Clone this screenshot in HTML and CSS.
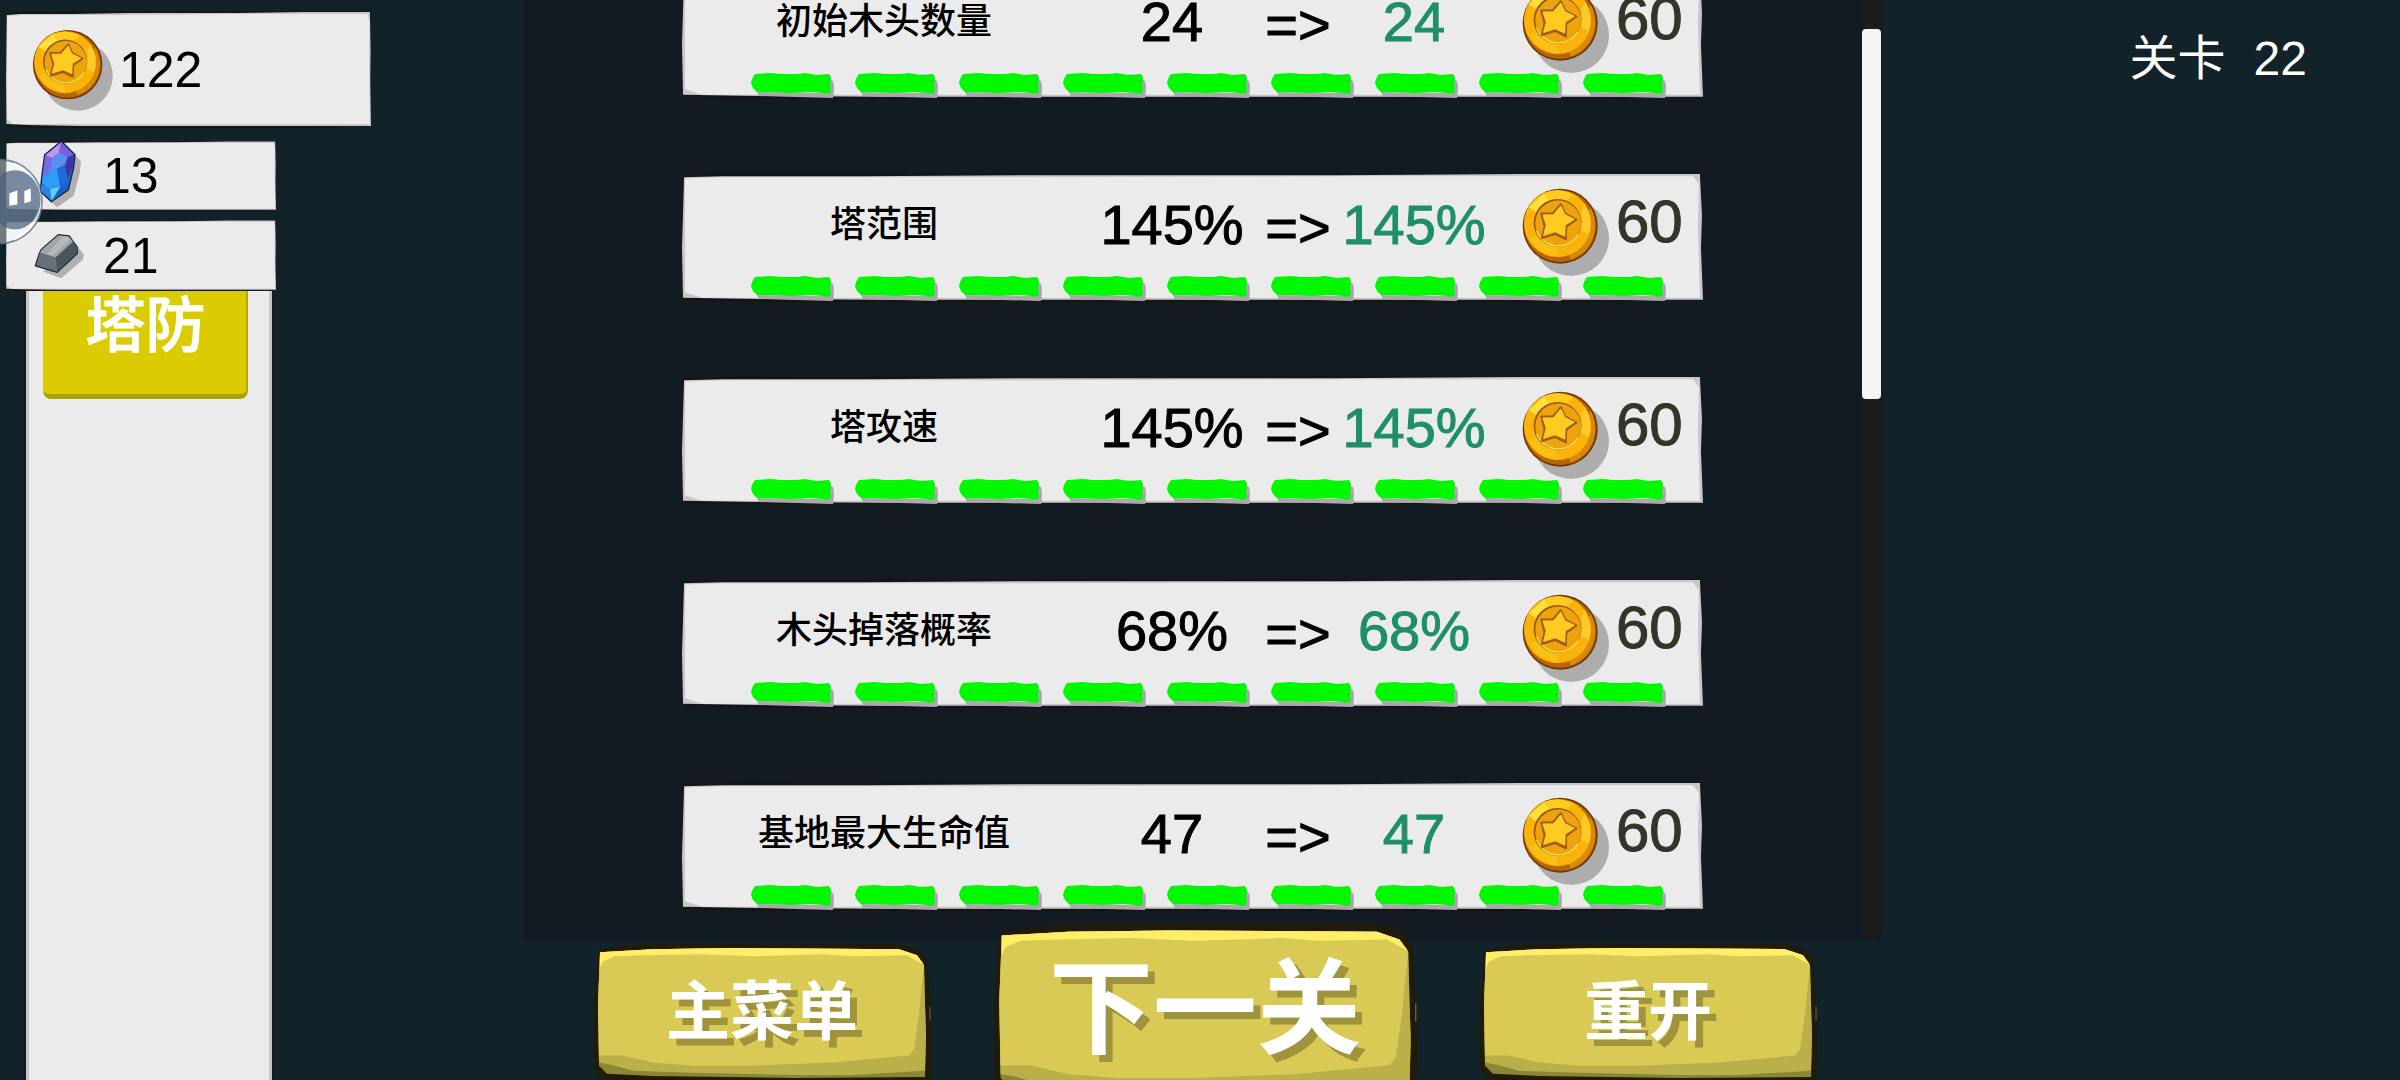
FILE: index.html
```html
<!DOCTYPE html>
<html lang="zh-CN">
<head>
<meta charset="utf-8">
<meta name="viewport" content="width=device-width, initial-scale=1">
<title>塔防</title>
<link rel="stylesheet" href="styles.css">
</head>
<body>
<svg class="defs" aria-hidden="true">
  <symbol id="paper" viewBox="0 0 1000 120" preserveAspectRatio="none">
    <path class="paper-ink" d="M1 2 60 0 140 1 260 0 420 0 600 0 780 0 940 0 996 0 999 6 998 60 1000 118 940 119 830 120 640 120 500 120 320 120 180 120 90 120 40 119 1 118 0 60Z"/>
    <path class="paper-edge" d="M2 4 40 3 180 3 340 2 520 2 640 2 820 1 980 1 997 1 999 40 998 70 1000 118 900 118 640 118 420 118 200 118 60 117 1 116 0 70Z"/>
    <path class="paper-face" d="M3 5 40 4 300 4 640 3 990 3 996 10 995 50 997 116 640 116 200 116 20 116 3 111Z"/>
  </symbol>
  <symbol id="coin" viewBox="20 20 265 267">
    <circle cx="168" cy="172" r="114" fill="#adadad"/>
    <circle cx="135" cy="136" r="113" fill="#70390a"/>
    <circle cx="135" cy="136" r="108" fill="#b96405"/>
    <path d="M226 80A108 108 0 0 1 168 236L150 200 205 140Z" fill="#d98a06"/>
    <circle cx="127" cy="128" r="101" fill="#f9b30b"/>
    <path d="M40 78 86 37 108 62 66 96Z" fill="#ffdf3a"/>
    <path d="M86 37Q130 18 176 42L150 60 104 60Z" fill="#ffcb1c"/>
    <path d="M208 68Q236 110 222 160L198 150 200 92Z" fill="#ffc928"/>
    <path d="M40 170Q70 222 130 228L124 204 66 164Z" fill="#fcc015"/>
    <circle cx="127" cy="126" r="72" fill="#9b560a"/>
    <circle cx="129" cy="128" r="69" fill="#eda30d"/>
    <path d="M64 150A69 69 0 0 0 188 162" fill="none" stroke="#ffe052" stroke-width="4"/>
    <path d="M137 70 150 98 184 116 153 138 152 176 120 160 80 172 88 136 78 98 112 98Z" fill="#a05c08" stroke="#a05c08" stroke-width="6" stroke-linejoin="round"/>
    <path d="M137 75 149 101 178 115 150 133 149 166 120 153 85 164 93 133 83 102 114 102Z" fill="#ffcb20" stroke="#ffcb20" stroke-width="3" stroke-linejoin="round"/>
  </symbol>
  <symbol id="chip" viewBox="0 0 84 25">
    <path d="M8 23 82 25Q84 14 82 8L79 6 72 20 6 19Z" fill="#a9a9a9"/>
    <path d="M1 6 4 1 20 0 30 1 46 1 54 0 66 2 78 1 80 5 79 13 80 19 76 21 72 20 60 19 40 20 20 19 6 19 2 15 0 10Z" fill="#00f800"/>
  </symbol>
  <symbol id="slab" viewBox="0 0 338 134" preserveAspectRatio="none">
    <path d="M5 7 30 3 60 1 160 0 300 0 325 6 334 16 337 60 338 100 337 134 20 134 6 131 1 120 1 60Z" fill="#211b06"/>
    <path d="M337 62v14" stroke="#75692a" stroke-width="1"/>
    <path d="M7 9 60 6 140 5 306 6 324 12 331 22 332 60 333 90 332 131 200 132 60 130 14 128 6 120 5 60Z" fill="#8d8434"/>
    <path d="M7 9 60 6 140 5 306 6 324 12 331 22 332 60 333 90 332 125 260 129 200 129 100 127 40 125 18 119 6 117 5 60Z" fill="#bab04a"/>
    <path d="M7 9 60 6 140 5 306 6 324 12 331 22 329 40 326 70 321 104 316 110 240 117 160 120 100 120 60 117 30 110 6 110 5 60Z" fill="#d8ca55"/>
    <path d="M7 9 60 6 140 5 306 6 324 12 331 21 325 18 314 12 260 13 230 11 160 13 110 11 50 12 22 13 10 18 7 24Z" fill="#ffee66"/>
  </symbol>
</svg>

<div class="screen">
  <aside class="sidebar">
    <div class="stat stat-gold">
      <svg class="paper"><use href="#paper"/></svg>
      <svg class="coin-small"><use href="#coin"/></svg>
      <span>122</span>
    </div>
    <div class="stat stat-crystal">
      <svg class="paper"><use href="#paper"/></svg>
      <svg class="gem" viewBox="115 15 135 210">
        <path d="M203 42 244 82 240 118 222 185 172 220 140 190Z" fill="#b0b0b0"/>
        <path d="M185 22 226 62 222 100 206 168 155 203 122 172 126 130 135 62Z" fill="#2a63d4" stroke="#15224c" stroke-width="4" stroke-linejoin="round"/>
        <path d="M185 25 137 64 158 72 178 55Z" fill="#c493f2"/>
        <path d="M185 25 178 55 205 68 223 63Z" fill="#7d5be0"/>
        <path d="M137 64 158 72 146 118 128 130Z" fill="#7e68e2"/>
        <path d="M158 72 178 55 205 68 196 92 172 104 146 118Z" fill="#5a8df0"/>
        <path d="M205 68 223 63 220 98 204 138 196 92Z" fill="#3a37a8"/>
        <path d="M146 118 172 104 182 160 152 168 128 150 128 130Z" fill="#2aa0f5"/>
        <path d="M172 104 196 92 204 138 182 160Z" fill="#2469d8"/>
        <path d="M124 152 152 166 156 200 124 171Z" fill="#2f84e0"/>
        <path d="M152 166 182 158 156 200Z" fill="#5cd2fb"/>
        <path d="M182 158 204 138 203 166 158 200Z" fill="#1b5fc9"/>
      </svg>
      <span>13</span>
    </div>
    <div class="stat stat-iron">
      <svg class="paper"><use href="#paper"/></svg>
      <svg class="ingot" viewBox="100 305 155 145">
        <path d="M226 338 252 372 250 388 184 445 130 424Z" fill="#b0b0b0"/>
        <path d="M175 313 208 317 232 350 233 370 172 427 106 407 118 370 124 358Z" fill="#56626a" stroke="#232c33" stroke-width="4" stroke-linejoin="round"/>
        <path d="M176 315 206 319 220 334 168 382 120 368 126 358Z" fill="#a0a5a5"/>
        <path d="M190 316 206 319 213 327 160 376 142 372Z" fill="#b5b8b6"/>
        <path d="M168 382 221 334 231 352 230 369 172 424Z" fill="#4a555c"/>
        <path d="M119 370 168 382 171 424 109 405Z" fill="#65727b"/>
      </svg>
      <span>21</span>
    </div>
    <nav class="drawer">
      <button class="tab" type="button">塔防</button>
    </nav>
    <svg class="assist" viewBox="0 70 135 262" aria-hidden="true">
      <circle cx="0" cy="201" r="126" fill="#fff" fill-opacity=".4" stroke="#5d7080" stroke-opacity=".8" stroke-width="6"/>
      <path d="M40 88A120 120 0 0 1 40 314" fill="none" stroke="#fff" stroke-opacity=".75" stroke-width="9"/>
      <ellipse cx="45" cy="196" rx="77" ry="89" fill="#4a5f80" fill-opacity=".72"/>
      <path d="M28 176 52 168 52 210 28 214ZM73 170 92 161 93 200 73 206Z" fill="#fff"/>
    </svg>
  </aside>

  <main class="center">
    <div class="scroller">
      <ul class="upgrades">
        <li class="row"><svg class="paper"><use href="#paper"/></svg>
          <div class="info"><span class="name">初始木头数量</span><span class="now">24</span><span class="arrow">=&gt;</span><span class="next">24</span><span class="cost"><svg class="coin"><use href="#coin"/></svg>60</span></div>
          <div class="chips"><svg><use href="#chip"/></svg><svg><use href="#chip"/></svg><svg><use href="#chip"/></svg><svg><use href="#chip"/></svg><svg><use href="#chip"/></svg><svg><use href="#chip"/></svg><svg><use href="#chip"/></svg><svg><use href="#chip"/></svg><svg><use href="#chip"/></svg></div></li>
        <li class="row"><svg class="paper"><use href="#paper"/></svg>
          <div class="info"><span class="name">塔范围</span><span class="now">145%</span><span class="arrow">=&gt;</span><span class="next">145%</span><span class="cost"><svg class="coin"><use href="#coin"/></svg>60</span></div>
          <div class="chips"><svg><use href="#chip"/></svg><svg><use href="#chip"/></svg><svg><use href="#chip"/></svg><svg><use href="#chip"/></svg><svg><use href="#chip"/></svg><svg><use href="#chip"/></svg><svg><use href="#chip"/></svg><svg><use href="#chip"/></svg><svg><use href="#chip"/></svg></div></li>
        <li class="row"><svg class="paper"><use href="#paper"/></svg>
          <div class="info"><span class="name">塔攻速</span><span class="now">145%</span><span class="arrow">=&gt;</span><span class="next">145%</span><span class="cost"><svg class="coin"><use href="#coin"/></svg>60</span></div>
          <div class="chips"><svg><use href="#chip"/></svg><svg><use href="#chip"/></svg><svg><use href="#chip"/></svg><svg><use href="#chip"/></svg><svg><use href="#chip"/></svg><svg><use href="#chip"/></svg><svg><use href="#chip"/></svg><svg><use href="#chip"/></svg><svg><use href="#chip"/></svg></div></li>
        <li class="row"><svg class="paper"><use href="#paper"/></svg>
          <div class="info"><span class="name">木头掉落概率</span><span class="now">68%</span><span class="arrow">=&gt;</span><span class="next">68%</span><span class="cost"><svg class="coin"><use href="#coin"/></svg>60</span></div>
          <div class="chips"><svg><use href="#chip"/></svg><svg><use href="#chip"/></svg><svg><use href="#chip"/></svg><svg><use href="#chip"/></svg><svg><use href="#chip"/></svg><svg><use href="#chip"/></svg><svg><use href="#chip"/></svg><svg><use href="#chip"/></svg><svg><use href="#chip"/></svg></div></li>
        <li class="row"><svg class="paper"><use href="#paper"/></svg>
          <div class="info"><span class="name">基地最大生命值</span><span class="now">47</span><span class="arrow">=&gt;</span><span class="next">47</span><span class="cost"><svg class="coin"><use href="#coin"/></svg>60</span></div>
          <div class="chips"><svg><use href="#chip"/></svg><svg><use href="#chip"/></svg><svg><use href="#chip"/></svg><svg><use href="#chip"/></svg><svg><use href="#chip"/></svg><svg><use href="#chip"/></svg><svg><use href="#chip"/></svg><svg><use href="#chip"/></svg><svg><use href="#chip"/></svg></div></li>
      </ul>
      <div class="track"><div class="thumb"></div></div>
    </div>
    <footer class="actions">
      <button class="action" type="button"><svg class="paper"><use href="#slab"/></svg><span>主菜单</span></button>
      <button class="action action-main" type="button"><svg class="paper"><use href="#slab"/></svg><span>下一关</span></button>
      <button class="action" type="button"><svg class="paper"><use href="#slab"/></svg><span>重开</span></button>
    </footer>
  </main>

  <header class="level"><span>关卡</span><span>22</span></header>
</div>
</body>
</html>
```
FILE: styles.css
```css
* {
  box-sizing: border-box;
}

body {
  margin: 0;
  background: #112229;
  color: #000;
  font-family: "Liberation Sans", "Noto Sans CJK SC", sans-serif;
}

button {
  border: 0;
  padding: 0;
  background: none;
  color: #fff;
  font-family: inherit;
  cursor: pointer;
}

.defs {
  display: none;
}

.screen {
  display: grid;
  grid-template-columns: 523fr 1359fr 518fr;
  grid-template-rows: minmax(0, 1fr);
  height: 100vh;
  overflow: hidden;
}

/* Hand-drawn sheet that lies behind a panel's content */
.paper {
  position: absolute;
  inset: 0;
  z-index: -1;
  width: 100%;
  height: 100%;
}

.paper-ink { fill: #151513; }
.paper-edge { fill: #c9c7c9; }
.paper-face { fill: #ebebeb; }

/* Left column */
.sidebar {
  position: relative;
  display: flex;
  flex-direction: column;
  align-items: flex-start;
  padding: 11px 0 0 6px;
}

.stat {
  position: relative;
  z-index: 0;
  display: flex;
  align-items: center;
  width: 270px;
  font-size: 50px;
  line-height: 60px;
}

.stat-gold {
  width: 365px;
  height: 117px;
  margin-bottom: 13px;
  padding-left: 26px;
  gap: 5px;
}

.stat-crystal {
  height: 70px;
  margin-bottom: 9px;
  padding-left: 32px;
  gap: 20px;
}

.stat-iron {
  height: 71px;
  padding-left: 27px;
  gap: 18px;
}

.coin-small {
  width: 82px;
  height: 82px;
}

.gem {
  width: 45px;
  height: 70px;
  margin-top: -4px;
}

.ingot {
  width: 52px;
  height: 48px;
}

.drawer {
  flex: 1;
  width: 250px;
  margin-left: 18px;
  padding: 0 25px 0 17px;
  border: solid #1a1a1a;
  border-width: 0 2px;
  background: #ebebeb;
  box-shadow: inset 3px 0 #c6c6c6, inset -3px 0 #c6c6c6;
}

.tab {
  display: block;
  width: 205px;
  height: 108px;
  padding-bottom: 32px;
  border-bottom: 5px solid #aea106;
  border-radius: 0 0 8px 8px;
  background: #dbcc02;
  box-shadow: inset -2px 0 #b5a804;
  font-size: 60px;
  font-weight: 500;
  line-height: 72px;
  -webkit-text-stroke: 1px currentColor;
}

.assist {
  position: absolute;
  top: 158px;
  left: 0;
  width: 45px;
  height: 87px;
}

/* Upgrade list */
.center {
  display: flex;
  flex-direction: column;
}

.scroller {
  flex: 1;
  display: flex;
  min-height: 0;
  background: #111b21;
}

.upgrades {
  flex: 1;
  display: flex;
  flex-direction: column;
  justify-content: flex-end;
  gap: 74px;
  min-height: 0;
  margin: 0;
  padding: 0 159px 29px;
  overflow: hidden;
  list-style: none;
}

.row {
  position: relative;
  z-index: 0;
  flex: none;
  height: 129px;
}

.info {
  display: grid;
  grid-template-columns: 404fr 172fr 80fr 152fr 213fr;
  align-items: center;
  height: 103px;
  font-size: 56px;
  line-height: 42px;
  text-align: center;
  white-space: nowrap;
  -webkit-text-stroke: 1px currentColor;
}

.name {
  font-size: 36px;
  font-weight: 500;
  -webkit-text-stroke: 0;
}

.now,
.next,
.arrow {
  display: flex;
  justify-content: center;
}

.arrow {
  padding-top: 6px;
}

.next {
  color: #1f8f65;
}

.cost {
  display: flex;
  align-items: center;
  gap: 6px;
  height: 92px;
  padding: 0 0 6px 32px;
  color: #343428;
  font-size: 60px;
}

.coin {
  flex: none;
  width: 88px;
  height: 90px;
  margin-top: 20px;
}

.chips {
  display: flex;
  gap: 20px;
  padding-left: 69px;
}

.chips svg {
  width: 84px;
  height: 25px;
}

.track {
  width: 20px;
  padding-top: 29px;
  border: solid #11181b;
  border-width: 0 1px 1px 0;
  border-radius: 0 0 6px 6px;
  background: #1c1c1c;
}

.thumb {
  height: 370px;
  border-radius: 4px;
  background: #f5f5f5;
}

/* Bottom buttons */
.actions {
  position: relative;
  display: flex;
  justify-content: center;
  align-items: flex-start;
  gap: 62px;
  height: 140px;
  padding: 3px 0 0 5px;
}

.action {
  position: relative;
  z-index: 0;
  flex: none;
  width: 338px;
  height: 137px;
  font-size: 64px;
  font-weight: 700;
  line-height: 76px;
  text-shadow: 7px 7px #a0933e;
}

.action-main {
  width: 424px;
  height: 172px;
  margin-top: -19px;
  font-size: 104px;
  line-height: 120px;
}

/* Stage counter */
.level {
  display: flex;
  justify-content: flex-end;
  gap: 28px;
  padding: 27px 93px 0 0;
  color: #fff;
  font-size: 48px;
  line-height: 64px;
}
```
